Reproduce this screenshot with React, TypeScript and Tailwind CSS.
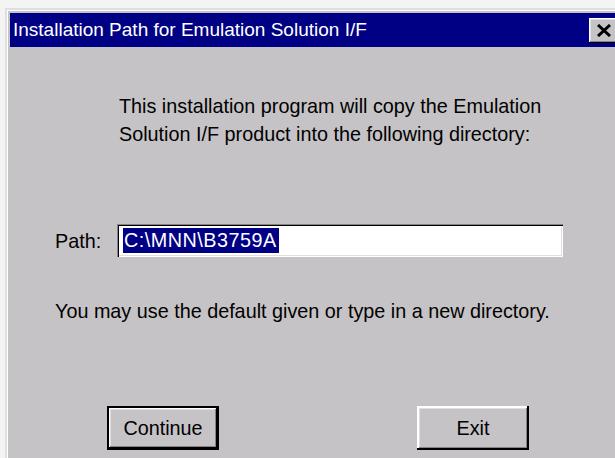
import React from 'react'

const ui = { fontFamily: '"Liberation Sans", Arial, sans-serif' }

function CloseBox() {
  return (
    <div className="w-[30px] h-[25px] bg-[#c6c3c6] flex items-center justify-center shadow-[inset_-1px_-1px_0_#000,inset_1px_1px_0_#fff,inset_-2px_-2px_0_#848284,inset_2px_2px_0_#dfdfdf]">
      <svg width="16" height="13" viewBox="0 0 16 13">
        <path d="M2 1 L14 12 M14 1 L2 12" stroke="#000" strokeWidth="3" />
      </svg>
    </div>
  )
}

function PushButton({ label, isDefault }: { label: string; isDefault?: boolean }) {
  return (
    <button
      className={
        'w-[112px] h-[44px] bg-[#c6c3c6] text-black text-[19.8px] flex items-center justify-center ' +
        (isDefault
          ? 'shadow-[inset_0_0_0_2px_#000,inset_-3px_-3px_0_#000,inset_3px_3px_0_#fff,inset_-4px_-4px_0_#848284,inset_4px_4px_0_#dfdfdf]'
          : 'shadow-[inset_-2px_-2px_0_#000,inset_2px_2px_0_#fff,inset_-3px_-3px_0_#848284,inset_3px_3px_0_#dfdfdf]')
      }
    >
      {label}
    </button>
  )
}

export default function App() {
  return (
    <div className="w-[615px] h-[458px] bg-[#f4f4f4] overflow-hidden pt-[8px] pl-[5px]" style={ui}>
      <div className="w-[630px] h-[470px] bg-[#c6c3c6] p-[5px] shadow-[inset_2px_2px_0_#dfdfdf,inset_3px_3px_0_#fff]">
        <div className="w-[609px] h-[34px] bg-[#000084] flex items-center justify-between pl-[3px] pr-0">
          <span className="text-white text-[19px]">
            Installation Path for Emulation Solution I/F
          </span>
          <CloseBox />
        </div>

        <div className="text-black text-[19.8px] leading-[28px]">
          <p className="pl-[109px] pt-[45px]">
            This installation program will copy the Emulation
            <br />
            Solution I/F product into the following directory:
          </p>

          <div className="flex items-center mt-[76px] pl-[45px]">
            <span className="w-[62px]">Path:</span>
            <div className="w-[446px] h-[33px] bg-white flex items-center pl-[6px] shadow-[inset_1px_1px_0_#848284,inset_2px_2px_0_#000,inset_-1px_-1px_0_#fff,inset_-2px_-2px_0_#dfdfdf]">
              <span className="bg-[#000084] text-white leading-[25px] pl-[1px] pr-[2px] tracking-[0.5px]">C:\MNN\B3759A</span>
            </div>
          </div>

          <p className="pl-[45px] mt-[40px]">You may use the default given or type in a new directory.</p>

          <div className="flex mt-[81px] pl-[97px] gap-[198px]">
            <PushButton label="Continue" isDefault />
            <PushButton label="Exit" />
          </div>
        </div>
      </div>
    </div>
  )
}
